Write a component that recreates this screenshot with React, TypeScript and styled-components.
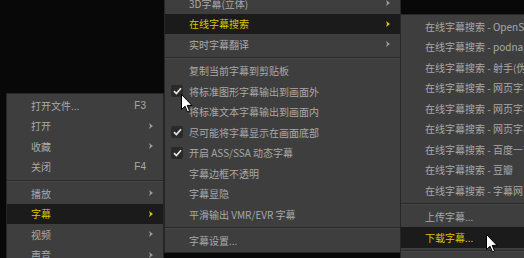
import React from 'react'
import styled, { createGlobalStyle } from 'styled-components'

const GlobalStyle = createGlobalStyle`
  html, body {
    margin: 0;
    padding: 0;
    background: #080808;
    overflow: hidden;
  }
  body {
    font-family: "Noto Sans CJK SC", "Liberation Sans", sans-serif;
  }
`

const Screen = styled.div`
  position: relative;
  width: 524px;
  height: 258px;
  background: #080808;
  overflow: hidden;
`

const Menu = styled.div<{ $left: number; $top: number; $width: number }>`
  position: absolute;
  left: ${p => p.$left}px;
  top: ${p => p.$top}px;
  width: ${p => p.$width}px;
  box-sizing: border-box;
  background: #3e3e3e;
  border: 1px solid #262626;
  padding: 1px 0;
  display: flex;
  flex-direction: column;
`

const Item = styled.div<{ $active?: boolean }>`
  display: grid;
  grid-template-columns: 24px 1fr auto 17px;
  align-items: center;
  height: 20.5px;
  font-size: 10px;
  white-space: nowrap;
  color: ${p => (p.$active ? '#d9c900' : '#a9a9a9')};
  background: ${p => (p.$active ? '#1b1b1b' : 'transparent')};
`

const Label = styled.span`
  overflow: hidden;
`

const Shortcut = styled.span`
  font-family: "Liberation Sans", sans-serif;
  font-size: 10px;
`

const ArrowCell = styled.span`
  display: flex;
  align-items: center;
  padding-left: 3px;
`

const CheckBox = styled.span`
  display: flex;
  align-items: center;
  justify-content: center;
  width: 12px;
  height: 12px;
  margin-left: 6px;
  border-radius: 2px;
  background: #2a2a2a;
`

const Separator = styled.div`
  height: 6px;
  display: flex;
  align-items: center;
  &::after {
    content: '';
    flex: 1;
    height: 1px;
    background: #2a2a2a;
    box-shadow: 0 1px 0 #474747;
  }
`

const Cursor = styled.svg<{ $left: number; $top: number }>`
  position: absolute;
  left: ${p => p.$left}px;
  top: ${p => p.$top}px;
`

type Entry =
  | { sep: true }
  | { label: string; key?: string; sub?: boolean; checked?: boolean; active?: boolean }

const Arrow = ({ color }: { color: string }) => (
  <svg width="4" height="6" viewBox="0 0 4 6">
    <path d="M0 0 L4 3 L0 6 L1 3 Z" fill={color} />
  </svg>
)

const Check = () => (
  <svg width="9" height="8" viewBox="0 0 9 8">
    <path d="M1 4.2 L3.4 6.5 L8 1.2" stroke="#e6e6e6" strokeWidth="1.7" fill="none" />
  </svg>
)

const PointerIcon = ({ left, top }: { left: number; top: number }) => (
  <Cursor $left={left} $top={top} width="12" height="19" viewBox="0 0 12 19">
    <path
      d="M0.5 0.5 L0.5 15.5 L4 12.2 L6.4 17.8 L8.6 16.9 L6.2 11.4 L11 11.4 Z"
      fill="#ffffff"
      stroke="#000000"
      strokeWidth="1"
      strokeLinejoin="round"
    />
  </Cursor>
)

const renderEntries = (entries: Entry[]) =>
  entries.map((e, i) => {
    if ('sep' in e) return <Separator key={i} />
    const color = e.active ? '#d9c900' : '#9a9a9a'
    return (
      <Item key={i} $active={e.active}>
        <span>
          {e.checked && (
            <CheckBox>
              <Check />
            </CheckBox>
          )}
        </span>
        <Label>{e.label}</Label>
        <Shortcut>{e.key}</Shortcut>
        <ArrowCell>{e.sub && <Arrow color={color} />}</ArrowCell>
      </Item>
    )
  })

const fileMenu: Entry[] = [
  { label: '打开文件...', key: 'F3' },
  { label: '打开', sub: true },
  { label: '收藏', sub: true },
  { label: '关闭', key: 'F4' },
  { sep: true },
  { label: '播放', sub: true },
  { label: '字幕', sub: true, active: true },
  { label: '视频', sub: true },
  { label: '声音', sub: true },
  { label: '滤镜', sub: true },
]

const subtitleMenu: Entry[] = [
  { label: '3D字幕(立体)', sub: true },
  { label: '在线字幕搜索', sub: true, active: true },
  { label: '实时字幕翻译', sub: true },
  { sep: true },
  { label: '复制当前字幕到剪贴板' },
  { label: '将标准图形字幕输出到画面外', checked: true },
  { label: '将标准文本字幕输出到画面内' },
  { label: '尽可能将字幕显示在画面底部', checked: true },
  { label: '开启 ASS/SSA 动态字幕', checked: true },
  { label: '字幕边框不透明' },
  { label: '字幕显隐' },
  { label: '平滑输出 VMR/EVR 字幕' },
  { sep: true },
  { label: '字幕设置...' },
]

const searchMenu: Entry[] = [
  { label: '在线字幕搜索 - OpenSubtitles' },
  { label: '在线字幕搜索 - podnapisi' },
  { label: '在线字幕搜索 - 射手(伪)' },
  { label: '在线字幕搜索 - 网页字幕' },
  { label: '在线字幕搜索 - 网页字幕' },
  { label: '在线字幕搜索 - 网页字幕' },
  { label: '在线字幕搜索 - 百度一下' },
  { label: '在线字幕搜索 - 豆瓣' },
  { label: '在线字幕搜索 - 字幕网' },
  { sep: true },
  { label: '上传字幕...' },
  { label: '下载字幕...', active: true },
  { sep: true },
  { label: '字幕搜索设置...' },
]

const App = () => {
  return (
    <Screen>
      <GlobalStyle />
      <Menu $left={6} $top={93} $width={158}>
        {renderEntries(fileMenu)}
      </Menu>
      <Menu $left={164} $top={-9} $width={237}>
        {renderEntries(subtitleMenu)}
      </Menu>
      <Menu $left={400} $top={14} $width={160}>
        {renderEntries(searchMenu)}
      </Menu>
      <PointerIcon left={181} top={94} />
      <PointerIcon left={486} top={234} />
    </Screen>
  )
}

export default App
